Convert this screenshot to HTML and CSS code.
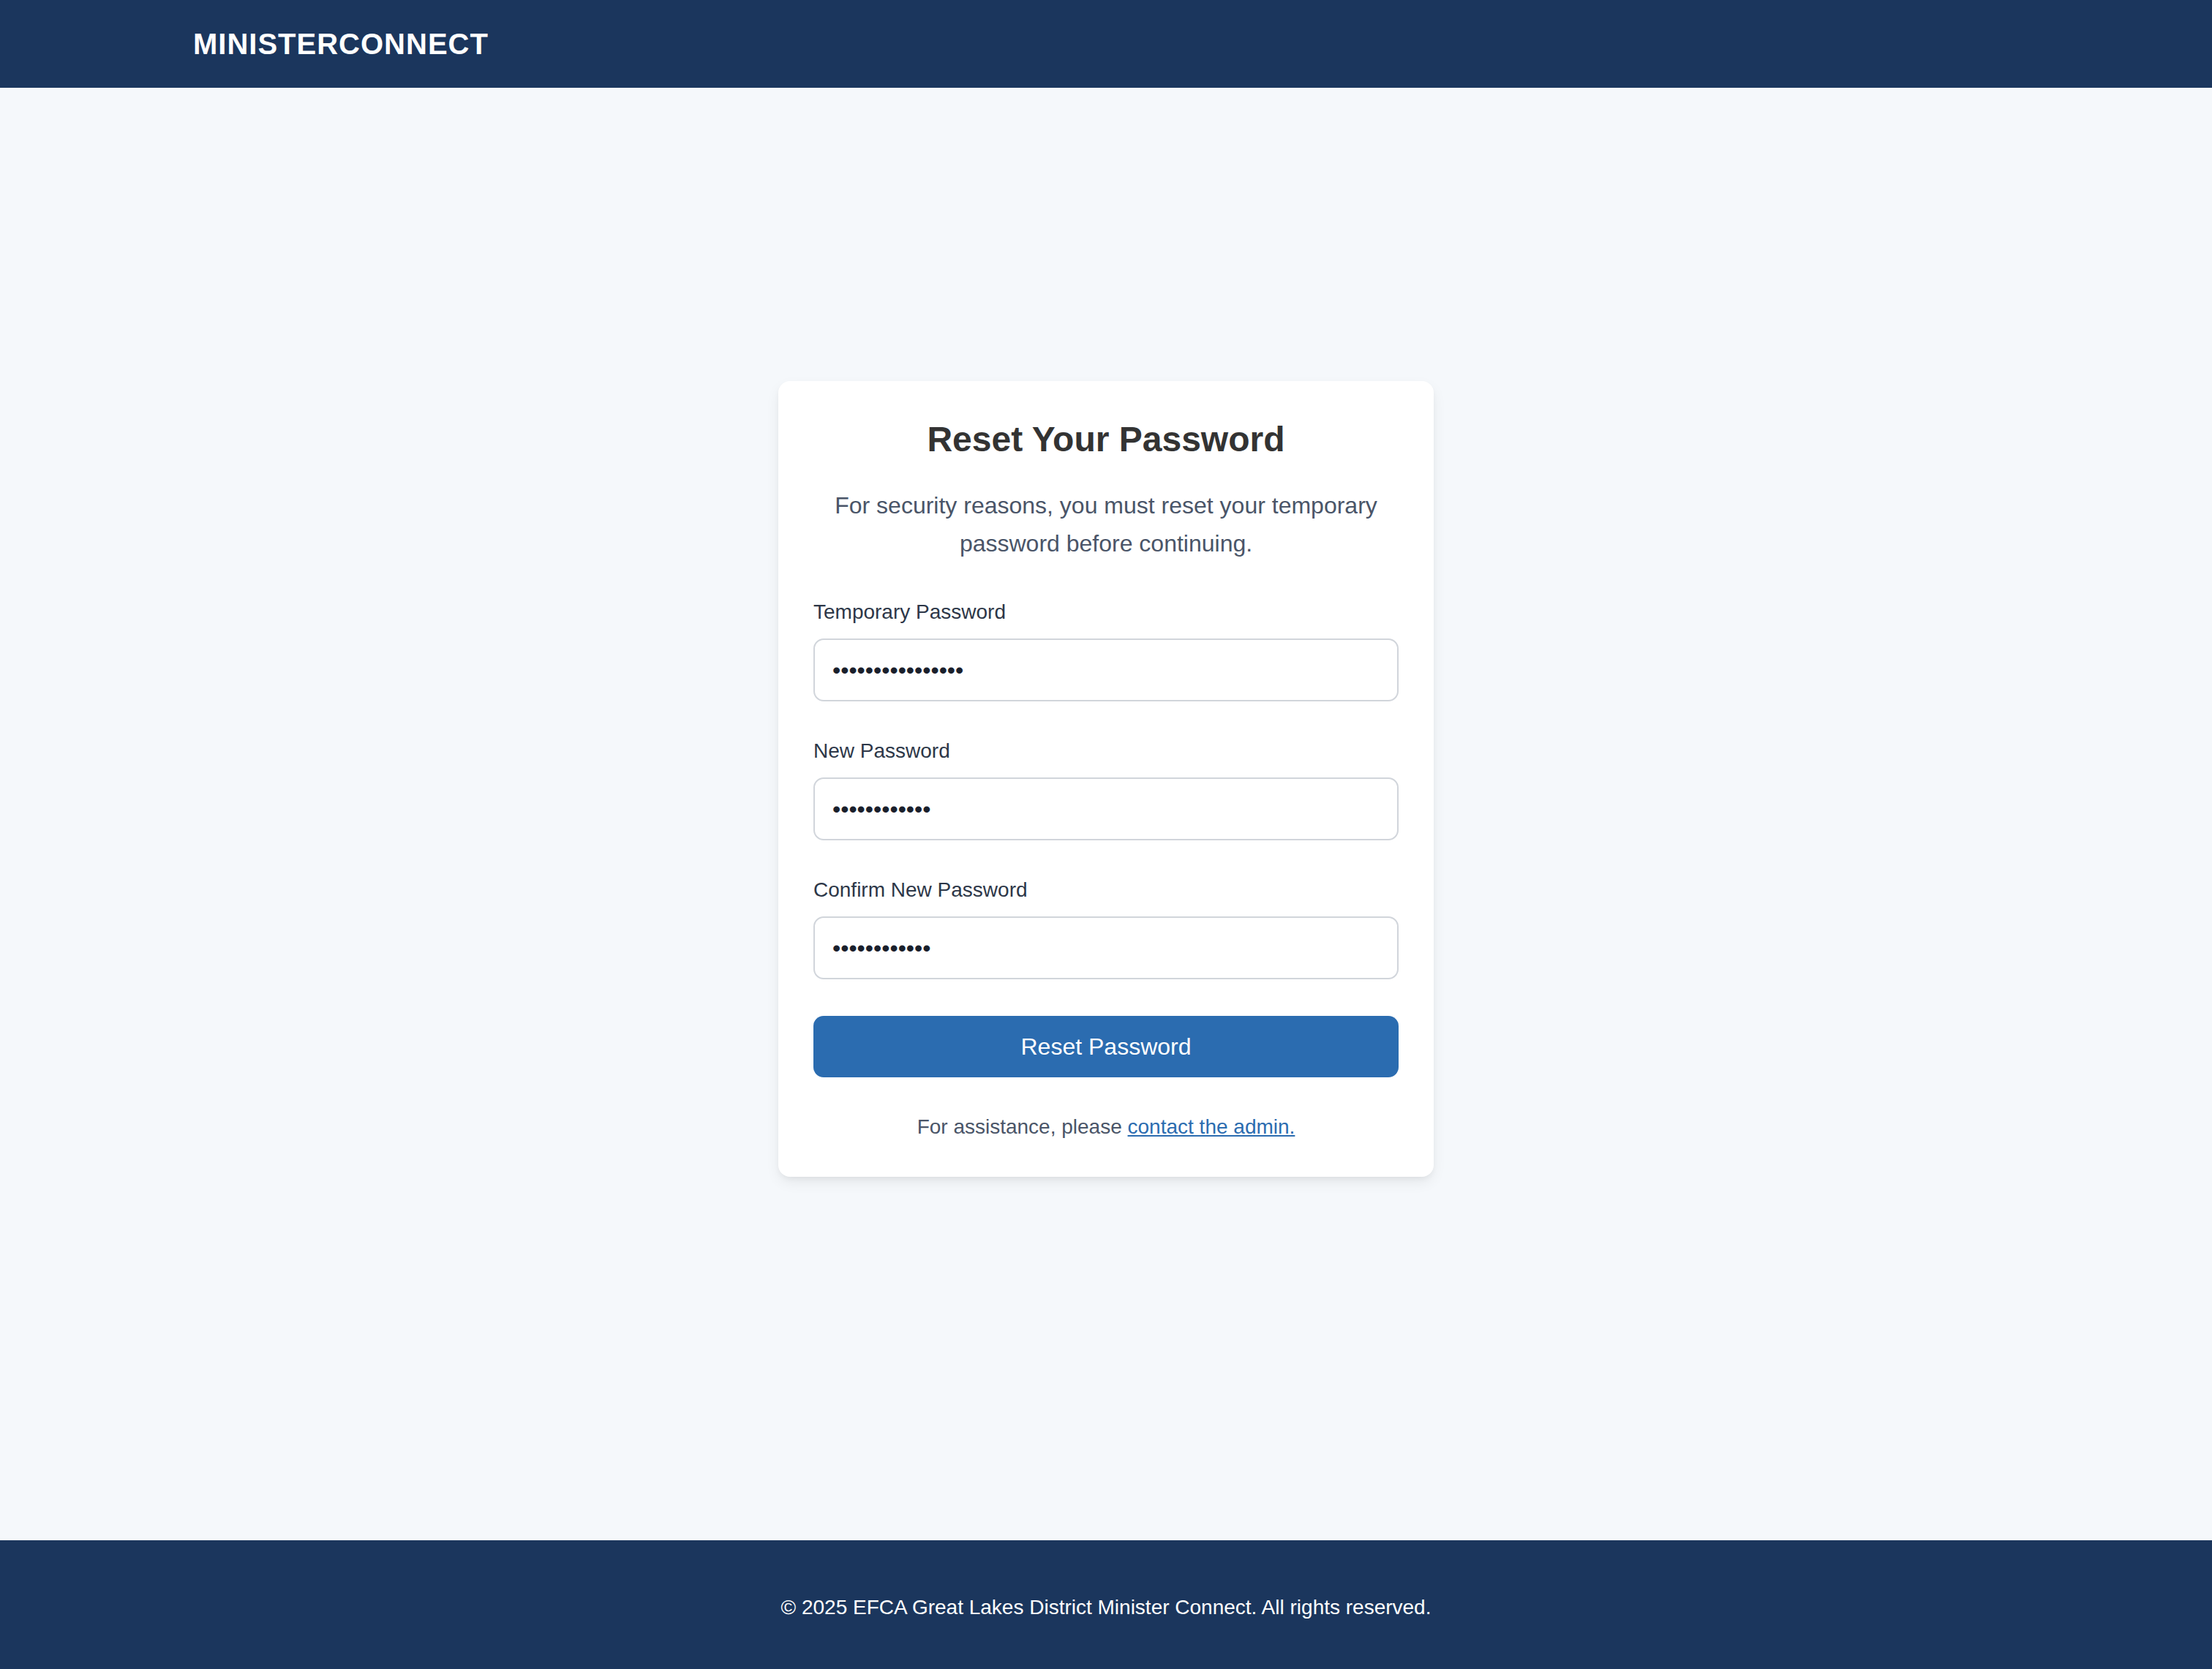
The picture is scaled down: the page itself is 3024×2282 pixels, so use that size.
FILE: index.html
```html
<!DOCTYPE html>
<html lang="en">
<head>
<meta charset="utf-8">
<title>Reset Your Password - MinisterConnect</title>
<link rel="stylesheet" href="styles.css">
</head>
<body>
<header class="site-header">
  <div class="container">
    <span class="brand">MINISTERCONNECT</span>
  </div>
</header>
<main class="main">
  <div class="card">
    <h1 class="card-title">Reset Your Password</h1>
    <p class="card-intro">For security reasons, you must reset your temporary password before continuing.</p>
    <form class="form">
      <div class="field">
        <label class="label" for="temp">Temporary Password</label>
        <input class="input" id="temp" type="password" value="abcdefghijklmnop">
      </div>
      <div class="field">
        <label class="label" for="new">New Password</label>
        <input class="input" id="new" type="password" value="abcdefghijkl">
      </div>
      <div class="field">
        <label class="label" for="confirm">Confirm New Password</label>
        <input class="input" id="confirm" type="password" value="abcdefghijkl">
      </div>
      <button class="button" type="button">Reset Password</button>
    </form>
    <p class="help">For assistance, please <a class="link" href="#">contact the admin.</a></p>
  </div>
</main>
<footer class="site-footer">
  <p class="footer-text">© 2025 EFCA Great Lakes District Minister Connect. All rights reserved.</p>
</footer>
</body>
</html>
```

FILE: styles.css
```css
* {
  box-sizing: border-box;
}

html, body {
  margin: 0;
  padding: 0;
}

body {
  font-family: "Liberation Sans", Arial, Helvetica, sans-serif;
  background: #f5f8fb;
  color: #333333;
  min-height: 100vh;
  display: flex;
  flex-direction: column;
}

.site-header {
  background: #1b365d;
  height: 120px;
  display: flex;
  align-items: center;
}

.container {
  width: 100%;
  max-width: 2560px;
  margin: 0 auto;
  padding: 0 32px;
}

.brand {
  color: #ffffff;
  font-weight: 700;
  font-size: 40px;
  letter-spacing: 1px;
  line-height: 56px;
}

.main {
  flex: 1;
  display: flex;
  justify-content: center;
  align-items: flex-start;
  padding-top: 401px;
}

.card {
  width: 896px;
  background: #ffffff;
  border-radius: 16px;
  padding: 48px;
  box-shadow: 0 8px 20px -2px rgba(0, 0, 0, 0.08), 0 4px 8px -2px rgba(0, 0, 0, 0.05);
}

.card-title {
  margin: 0 0 32px;
  text-align: center;
  font-size: 48px;
  line-height: 64px;
  font-weight: 700;
  color: #333333;
}

.card-intro {
  margin: 0 0 48px;
  text-align: center;
  font-size: 32px;
  line-height: 52px;
  color: #4a5568;
}

.form {
  display: flex;
  flex-direction: column;
}

.field {
  display: flex;
  flex-direction: column;
  margin-bottom: 48px;
}

.label {
  font-size: 28px;
  line-height: 40px;
  color: #2d3748;
  margin-bottom: 16px;
}

.input {
  height: 86px;
  border: 2px solid #d1d5db;
  border-radius: 14px;
  padding: 0 24px;
  font-family: "Liberation Sans", Arial, sans-serif;
  font-size: 32px;
  color: #1a202c;
  background: #ffffff;
  outline: none;
}

.button {
  height: 84px;
  border: none;
  border-radius: 14px;
  background: #2b6cb0;
  color: #ffffff;
  font-family: "Liberation Sans", Arial, sans-serif;
  font-size: 32px;
  cursor: pointer;
  margin-top: 2px;
}

.help {
  margin: 48px 0 0;
  text-align: center;
  font-size: 28px;
  line-height: 40px;
  color: #4a5568;
}

.link {
  color: #2b6cb0;
  text-decoration: underline;
}

.site-footer {
  background: #1b365d;
  height: 176px;
  display: flex;
  align-items: center;
  justify-content: center;
}

.footer-text {
  margin: 8px 0 0;
  color: #ffffff;
  font-size: 28px;
  line-height: 40px;
}
```
